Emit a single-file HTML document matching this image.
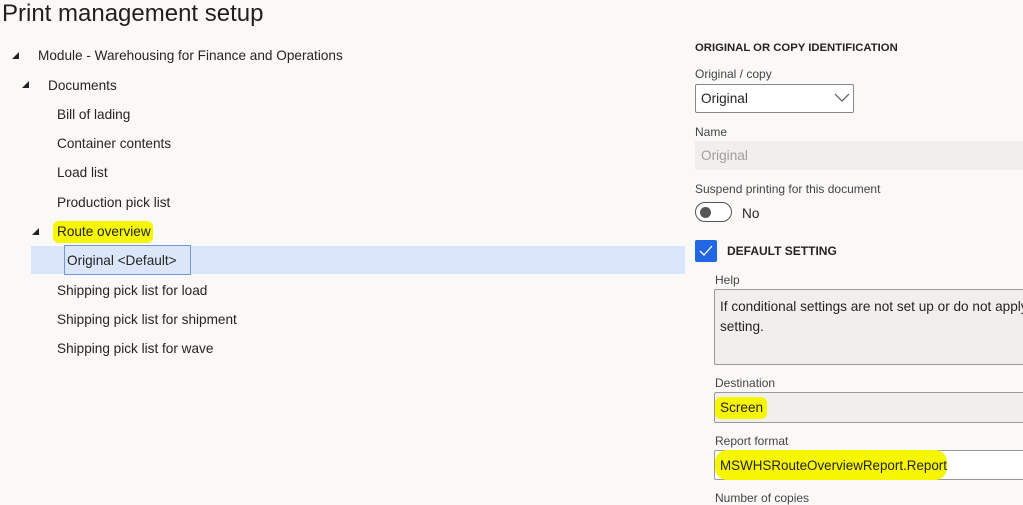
<!DOCTYPE html>
<html><head><meta charset="utf-8"><style>
*{margin:0;padding:0;box-sizing:border-box}
body{width:1023px;height:505px;overflow:hidden;background:#faf9f8;font-family:"Liberation Sans",sans-serif;color:#252423;position:relative}
.a{position:absolute;white-space:nowrap}
.t{font-size:13.6px;line-height:18px}
.tri{position:absolute;width:0;height:0;border-left:7px solid transparent;border-bottom:7px solid #222}
.lbl{font-size:12px;color:#444;line-height:14px}
.hl{background:#f6f600;border-radius:6px}
</style></head><body>
<div class="a" style="left:2px;top:-1px;font-size:24px;line-height:30px;color:#201f1e">Print management setup</div>

<div class="tri" style="left:12px;top:52px"></div>
<div class="a t" style="left:38px;top:47px">Module - Warehousing for Finance and Operations</div>
<div class="tri" style="left:22px;top:81px"></div>
<div class="a t" style="left:48px;top:77px">Documents</div>
<div class="a t" style="left:57px;top:106px">Bill of lading</div>
<div class="a t" style="left:57px;top:135px">Container contents</div>
<div class="a t" style="left:57px;top:164px">Load list</div>
<div class="a t" style="left:57px;top:194px">Production pick list</div>
<div class="tri" style="left:32px;top:228px"></div>
<div class="a hl" style="left:53px;top:221px;width:100px;height:22px"></div>
<div class="a t" style="left:57px;top:223px">Route overview</div>
<div class="a" style="left:31px;top:246px;width:654px;height:28px;background:#dbe6fa"></div>
<div class="a" style="left:64px;top:245px;width:127px;height:30px;border:1px solid #6f9ad8"></div>
<div class="a t" style="left:67px;top:252px">Original &lt;Default&gt;</div>
<div class="a t" style="left:57px;top:282px">Shipping pick list for load</div>
<div class="a t" style="left:57px;top:311px">Shipping pick list for shipment</div>
<div class="a t" style="left:57px;top:340px">Shipping pick list for wave</div>

<div class="a" style="left:695px;top:42px;font-size:11.3px;font-weight:bold;line-height:13px">ORIGINAL OR COPY IDENTIFICATION</div>
<div class="a lbl" style="left:695px;top:67px">Original / copy</div>
<div class="a" style="left:695px;top:84px;width:159px;height:29px;background:#fff;border:1px solid #8a8886;border-radius:2px"></div>
<div class="a t" style="left:701px;top:90px">Original</div>
<svg class="a" style="left:834px;top:92px" width="16" height="10"><path d="M1 2 L8 9 L15 2" fill="none" stroke="#555" stroke-width="1.2"/></svg>
<div class="a lbl" style="left:695px;top:125px">Name</div>
<div class="a" style="left:695px;top:141px;width:328px;height:29px;background:#f0efee"></div>
<div class="a t" style="left:701px;top:147px;color:#a19f9d">Original</div>
<div class="a lbl" style="left:695px;top:182px">Suspend printing for this document</div>
<div class="a" style="left:695px;top:202px;width:37px;height:20px;border:1px solid #555;border-radius:10px;background:#fff"></div>
<div class="a" style="left:700px;top:207px;width:11px;height:11px;border-radius:50%;background:#555"></div>
<div class="a t" style="left:742px;top:205px">No</div>
<div class="a" style="left:695px;top:240px;width:22px;height:22px;background:#2266e3;border-radius:2px"></div>
<svg class="a" style="left:699px;top:245px" width="14" height="12"><path d="M1 6 L5 10 L13 1" fill="none" stroke="#fff" stroke-width="1.3"/></svg>
<div class="a" style="left:727px;top:244px;font-size:12px;font-weight:bold;line-height:14px">DEFAULT SETTING</div>
<div class="a lbl" style="left:715px;top:273px">Help</div>
<div class="a" style="left:714px;top:289px;width:320px;height:76px;background:#f0efee;border:1px solid #999;border-radius:2px"></div>
<div class="a t" style="left:720px;top:298px">If conditional settings are not set up or do not apply</div>
<div class="a t" style="left:720px;top:318px">setting.</div>
<div class="a lbl" style="left:715px;top:376px">Destination</div>
<div class="a" style="left:714px;top:392px;width:320px;height:31px;background:#f0efee;border:1px solid #999;border-radius:2px"></div>
<div class="a hl" style="left:715px;top:397px;width:52px;height:22px"></div>
<div class="a t" style="left:720px;top:399px">Screen</div>
<div class="a lbl" style="left:715px;top:434px">Report format</div>
<div class="a" style="left:714px;top:450px;width:320px;height:30px;background:#fff;border:1px solid #999;border-radius:2px"></div>
<div class="a hl" style="left:715px;top:450px;width:232px;height:30px;border-radius:12px"></div>
<div class="a" style="left:720px;top:457px;font-size:13.4px;line-height:18px">MSWHSRouteOverviewReport.Report</div>
<div class="a lbl" style="left:715px;top:491px">Number of copies</div>
</body></html>
